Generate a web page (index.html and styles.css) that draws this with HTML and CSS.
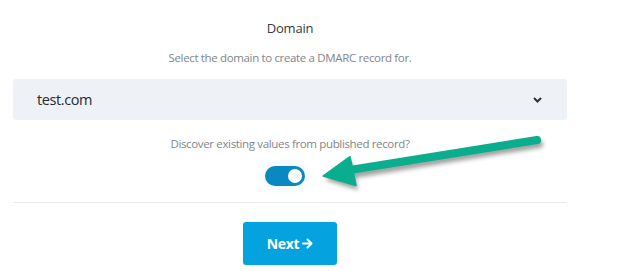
FILE: index.html
```html
<!DOCTYPE html>
<html>
<head>
<meta charset="utf-8">
<link rel="stylesheet" href="styles.css">
</head>
<body>
<div class="form">
  <div class="label">Domain</div>
  <div class="help">Select the domain to create a DMARC record for.</div>
  <div class="select">
    <span class="value">test.com</span>
    <svg class="chev" width="9" height="6" viewBox="0 0 9 6"><path d="M1 1l3.5 3.5L8 1" fill="none" stroke="#2b3340" stroke-width="2"/></svg>
  </div>
  <div class="help discover">Discover existing values from published record?</div>
  <div class="toggle-row"><div class="toggle"><div class="knob"></div></div></div>
  <div class="divider"></div>
  <div class="actions"><button class="next"><span>Next</span><svg class="arr" width="11" height="11" viewBox="0 0 11 11"><path d="M1 5.5h8M5.5 1.5l4 4-4 4" fill="none" stroke="#fff" stroke-width="2" stroke-linecap="round" stroke-linejoin="round"/></svg></button></div>
</div>
<svg class="pointer" width="633" height="271" viewBox="0 0 633 271">
  <defs>
    <filter id="sh" x="-20%" y="-50%" width="140%" height="200%">
      <feGaussianBlur stdDeviation="2.2"/>
    </filter>
  </defs>
  <g transform="translate(2,4)" opacity="0.45" filter="url(#sh)">
    <path d="M537 140 L352 170" stroke="#333" stroke-width="8" stroke-linecap="round"/>
    <path d="M323 176 L350 157 L356 186 Z" fill="#333"/>
  </g>
  <path d="M537 140 L350 170" stroke="#0aae8e" stroke-width="8" stroke-linecap="round"/>
  <path d="M323 176 L350 156.5 L356 185.5 Z" fill="#0aae8e" stroke="#0aae8e" stroke-width="1.5" stroke-linejoin="round"/>
</svg>
</body>
</html>
```
FILE: styles.css
```css
html, body { margin: 0; padding: 0; background: #fff; }
body { font-family: "Open Sans", "Noto Sans", sans-serif; }
.form { width: 554px; margin-left: 13px; display: flex; flex-direction: column; align-items: stretch; }
.label { text-align: center; font-size: 13px; color: #343a40; margin-top: 19px; line-height: 18px; letter-spacing: -0.2px; }
.help { text-align: center; font-size: 11.5px; color: #7f858c; line-height: 16px; letter-spacing: -0.35px; }
.label + .help { margin-top: 13px; }
.select { margin-top: 13px; height: 41px; background: #eef1f6; border-radius: 3px; display: flex; align-items: center; justify-content: space-between; padding: 0 25px 0 24px; box-sizing: border-box; }
.value { font-size: 14.5px; color: #232a33; letter-spacing: -0.4px; }
.chev { display: block; }
.discover { margin-top: 16px; }
.toggle-row { display: flex; justify-content: center; margin-top: 14px; padding-right: 10px; }
.toggle { width: 40px; height: 20px; border-radius: 10px; background: #0a88c2; box-shadow: 0 0 10px 3px rgba(30, 150, 220, 0.08); display: flex; align-items: center; justify-content: flex-end; padding: 0 3px; box-sizing: border-box; }
.knob { width: 14px; height: 14px; border-radius: 50%; background: #fff; }
.divider { margin-top: 16px; height: 1px; background: #e8ebf0; }
.actions { display: flex; justify-content: center; margin-top: 19px; }
.next { width: 94px; height: 43px; border: none; border-radius: 3px; background: #04a3e0; color: #fff; font-family: "Open Sans", sans-serif; font-weight: 700; font-size: 14px; padding: 0; letter-spacing: -0.3px; display: flex; align-items: center; justify-content: center; gap: 3px; }
.arr { display: block; }
.pointer { position: absolute; left: 0; top: 0; pointer-events: none; }
```
